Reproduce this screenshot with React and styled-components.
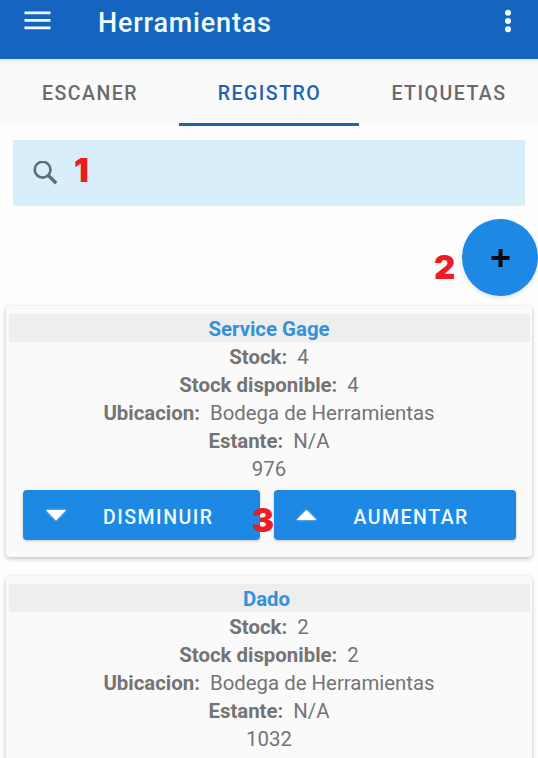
import React from 'react';
import styled, { createGlobalStyle } from 'styled-components';

const GlobalStyle = createGlobalStyle`
  * { box-sizing: border-box; }
  html, body { margin: 0; height: 758px; overflow: hidden; background: #fff; }
  button { font: inherit; border: 0; padding: 0; }
`;

const Screen = styled.div`
  width: 538px;
  height: 758px;
  overflow: hidden;
  background: #fefefe;
  color: #747474;
  font-family: Roboto, sans-serif;
  font-size: 20.4px;
`;

const AppBar = styled.header`
  display: flex;
  align-items: flex-start;
  height: 59px;
  padding: 0 26px 0 24px;
  background: #1565c0;
  color: #f0fcff;
`;

const MenuIcon = styled.svg`
  width: 27px;
  height: 20px;
  margin-top: 11px;
`;

const AppTitle = styled.h1`
  flex: 1;
  margin: 0 0 0 47px;
  font-size: 27px;
  font-weight: 500;
  line-height: 47px;
  letter-spacing: 0.8px;
`;

const MoreIcon = styled.svg`
  width: 8px;
  height: 24px;
  margin-top: 9px;
`;

const Tabs = styled.nav`
  display: grid;
  grid-template-columns: 179px 180px 179px;
  height: 67px;
  background: linear-gradient(#dfe8f5, #f4f6f9 3px, #fafafa 7px);
`;

const Tab = styled.button`
  padding: 5px 0 0 1px;
  background: none;
  border-bottom: 3px solid ${(p) => (p.$active ? '#1f63ae' : 'transparent')};
  color: ${(p) => (p.$active ? '#1f62b0' : '#6a6a6a')};
  font-size: 19.5px;
  font-weight: 500;
  letter-spacing: 1.5px;
`;

const SearchBox = styled.div`
  position: relative;
  display: flex;
  align-items: center;
  height: 66px;
  margin: 14px 13px 0;
  padding-left: 20px;
  background: #d9eefb;
`;

const SearchIcon = styled.svg`
  width: 25px;
  height: 25px;
`;

const ActionRow = styled.div`
  position: relative;
  display: flex;
  justify-content: flex-end;
  height: 100px;
  padding-top: 13px;
`;

const AddButton = styled.button`
  display: grid;
  place-items: center;
  width: 76px;
  height: 77px;
  border-radius: 50%;
  background: #1e88e5;
  box-shadow: 0 2px 5px rgba(0, 0, 0, 0.12);
`;

const Marker = styled.span`
  position: absolute;
  z-index: 2;
  left: ${(p) => p.$left}px;
  top: ${(p) => p.$top}px;
  color: #ed1c24;
  font-family: Inter, "Liberation Sans", sans-serif;
  font-size: 33px;
  font-weight: 900;
  line-height: 34px;
`;

const Card = styled.article`
  width: 526px;
  height: 251px;
  margin: 0 0 19px 6px;
  padding: 8px 2px 0 3px;
  border-radius: 4px;
  background: #fafafa;
  box-shadow: 0 2px 5px rgba(0, 0, 0, 0.22), 0 0 2px rgba(0, 0, 0, 0.08);
  text-align: center;
`;

const CardTitle = styled.h2`
  height: 28px;
  margin: 0;
  padding-right: ${(p) => p.$inset}px;
  background: #eee;
  color: #3391dc;
  font-size: 20.4px;
  font-weight: 700;
  line-height: 31px;
`;

const Field = styled.div`
  display: flex;
  justify-content: center;
  gap: 10px;
  height: 28px;
  padding-right: 1px;
  line-height: 31px;
`;

const Label = styled.strong`
  font-weight: 700;
`;

const Actions = styled.div`
  position: relative;
  display: grid;
  grid-template-columns: 237px 242px;
  gap: 13.5px;
  margin: 8px 0 0 14px;
`;

const ActionButton = styled.button`
  display: flex;
  align-items: center;
  height: 50px;
  padding-left: 20px;
  border-radius: 4px;
  background: #1e88e5;
  color: #effcff;
  box-shadow: 0 1px 3px rgba(0, 0, 0, 0.22);
`;

const ArrowIcon = styled.svg`
  width: 26px;
  height: 20px;
  filter: drop-shadow(0 0 1px rgba(255, 255, 255, 0.7));
`;

const ActionLabel = styled.span`
  margin-left: 34px;
  padding-top: 4px;
  font-size: 19.5px;
  font-weight: 500;
  letter-spacing: 1.5px;
`;

const tools = [
  { name: 'Service Gage', stock: 4, available: 4, place: 'Bodega de Herramientas', shelf: 'N/A', code: '976', expanded: true, inset: 1 },
  { name: 'Dado', stock: 2, available: 2, place: 'Bodega de Herramientas', shelf: 'N/A', code: '1032', inset: 6 },
];

function ToolField({ label, value }) {
  return (
    <Field>
      <Label>{label}:</Label>
      <span>{value}</span>
    </Field>
  );
}

function ToolCard({ tool }) {
  return (
    <Card>
      <CardTitle $inset={tool.inset}>{tool.name}</CardTitle>
      <ToolField label="Stock" value={tool.stock} />
      <ToolField label="Stock disponible" value={tool.available} />
      <ToolField label="Ubicacion" value={tool.place} />
      <ToolField label="Estante" value={tool.shelf} />
      <Field>{tool.code}</Field>
      {tool.expanded && (
        <Actions>
          <ActionButton>
            <ArrowIcon viewBox="0 0 26 20"><path d="M3 5H23L13 15.5Z" fill="#fff" /></ArrowIcon>
            <ActionLabel>DISMINUIR</ActionLabel>
          </ActionButton>
          <ActionButton>
            <ArrowIcon viewBox="0 0 26 20"><path d="M2.5 15H22.5L12.5 5Z" fill="#fff" /></ArrowIcon>
            <ActionLabel>AUMENTAR</ActionLabel>
          </ActionButton>
          <Marker $left={229} $top={13}>3</Marker>
        </Actions>
      )}
    </Card>
  );
}

export default function App() {
  return (
    <>
      <GlobalStyle />
      <Screen>
        <AppBar>
          <MenuIcon viewBox="0 0 27 20">
            <path d="M.5 1.8h26M.5 9.3h26M.5 16.8h26" stroke="currentColor" strokeWidth="2.8" />
          </MenuIcon>
          <AppTitle>Herramientas</AppTitle>
          <MoreIcon viewBox="0 0 8 24" fill="currentColor">
            <circle cx="4" cy="3.8" r="3" />
            <circle cx="4" cy="12" r="3" />
            <circle cx="4" cy="20.2" r="3" />
          </MoreIcon>
        </AppBar>
        <Tabs>
          <Tab>ESCANER</Tab>
          <Tab $active>REGISTRO</Tab>
          <Tab>ETIQUETAS</Tab>
        </Tabs>
        <SearchBox>
          <SearchIcon viewBox="0 0 25 25" fill="none" stroke="#5e6d75">
            <circle cx="9.6" cy="8.7" r="7.9" strokeWidth="2.6" />
            <path d="M15.4 14.5L23.2 22.3" strokeWidth="3.4" />
          </SearchIcon>
          <Marker $left={61} $top={13}>1</Marker>
        </SearchBox>
        <ActionRow>
          <Marker $left={434} $top={44}>2</Marker>
          <AddButton>
            <svg width="20" height="20" viewBox="0 0 20 20">
              <path d="M10.5 1v18M1.5 10h18" stroke="#04070d" strokeWidth="4" />
            </svg>
          </AddButton>
        </ActionRow>
        {tools.map((tool) => <ToolCard key={tool.name} tool={tool} />)}
      </Screen>
    </>
  );
}
